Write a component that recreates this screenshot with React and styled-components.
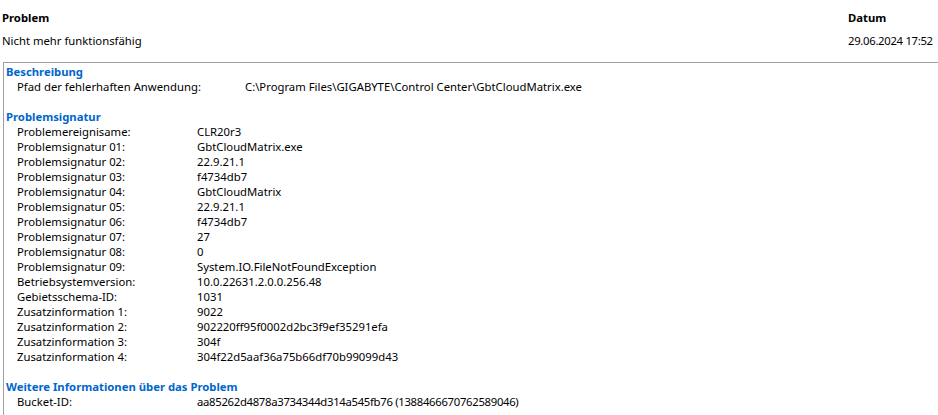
import React from "react";
import styled, { createGlobalStyle } from "styled-components";

const Global = createGlobalStyle`
  html, body { margin: 0; padding: 0; background: #fff; }
  body { font-family: "Noto Sans", "Open Sans", sans-serif; font-size: 11.3px; color: #000; }
`;

const Page = styled.div`
  width: 938px;
  height: 415px;
  overflow: hidden;
  background: #fff;
`;

const Header = styled.div`
  display: grid;
  grid-template-columns: 1fr 90px;
  padding: 10px 0 0 2px;
  row-gap: 8px;
  line-height: 15px;
  white-space: nowrap;
`;

const HeadCell = styled.div`
  font-weight: bold;
`;

const Cell = styled.div`
  letter-spacing: ${(p) => (p.$tight ? "-0.3px" : "normal")};
`;

const Box = styled.div`
  margin: 14px 0 0 3px;
  border-top: 1px solid #a0a0a0;
  border-left: 1px solid #a0a0a0;
  padding: 1px 0 0 2px;
  line-height: 15px;
  height: 400px;
`;

const Section = styled.section`
  margin-bottom: 15px;
`;

const SectionTitle = styled.div`
  color: #0066cc;
  font-weight: bold;
`;

const Row = styled.div`
  display: grid;
  grid-template-columns: ${(p) => p.$labelWidth}px 1fr;
  padding-left: 11px;
  white-space: nowrap;
`;

const Value = styled.span`
  letter-spacing: ${(p) => (p.$tight ? "-0.3px" : "normal")};
`;

const signatur = [
  ["Problemereignisame:", "CLR20r3"],
  ["Problemsignatur 01:", "GbtCloudMatrix.exe"],
  ["Problemsignatur 02:", "22.9.21.1"],
  ["Problemsignatur 03:", "f4734db7"],
  ["Problemsignatur 04:", "GbtCloudMatrix"],
  ["Problemsignatur 05:", "22.9.21.1"],
  ["Problemsignatur 06:", "f4734db7"],
  ["Problemsignatur 07:", "27"],
  ["Problemsignatur 08:", "0"],
  ["Problemsignatur 09:", "System.IO.FileNotFoundException"],
  ["Betriebsystemversion:", "10.0.22631.2.0.0.256.48"],
  ["Gebietsschema-ID:", "1031"],
  ["Zusatzinformation 1:", "9022"],
  ["Zusatzinformation 2:", "902220ff95f0002d2bc3f9ef35291efa"],
  ["Zusatzinformation 3:", "304f"],
  ["Zusatzinformation 4:", "304f22d5aaf36a75b66df70b99099d43"],
];

export default function App() {
  return (
    <Page>
      <Global />
      <Header>
        <HeadCell>Problem</HeadCell>
        <HeadCell>Datum</HeadCell>
        <Cell>Nicht mehr funktionsfähig</Cell>
        <Cell $tight>29.06.2024 17:52</Cell>
      </Header>
      <Box>
        <Section>
          <SectionTitle>Beschreibung</SectionTitle>
          <Row $labelWidth={228}>
            <span>Pfad der fehlerhaften Anwendung:</span>
            <Value>C:\Program Files\GIGABYTE\Control Center\GbtCloudMatrix.exe</Value>
          </Row>
        </Section>
        <Section>
          <SectionTitle>Problemsignatur</SectionTitle>
          {signatur.map(([l, v], i) => (
            <Row key={i} $labelWidth={180}>
              <span>{l}</span>
              <Value>{v}</Value>
            </Row>
          ))}
        </Section>
        <Section>
          <SectionTitle>Weitere Informationen über das Problem</SectionTitle>
          <Row $labelWidth={180}>
            <span>Bucket-ID:</span>
            <Value $tight>aa85262d4878a3734344d314a545fb76 (1388466670762589046)</Value>
          </Row>
        </Section>
      </Box>
    </Page>
  );
}
